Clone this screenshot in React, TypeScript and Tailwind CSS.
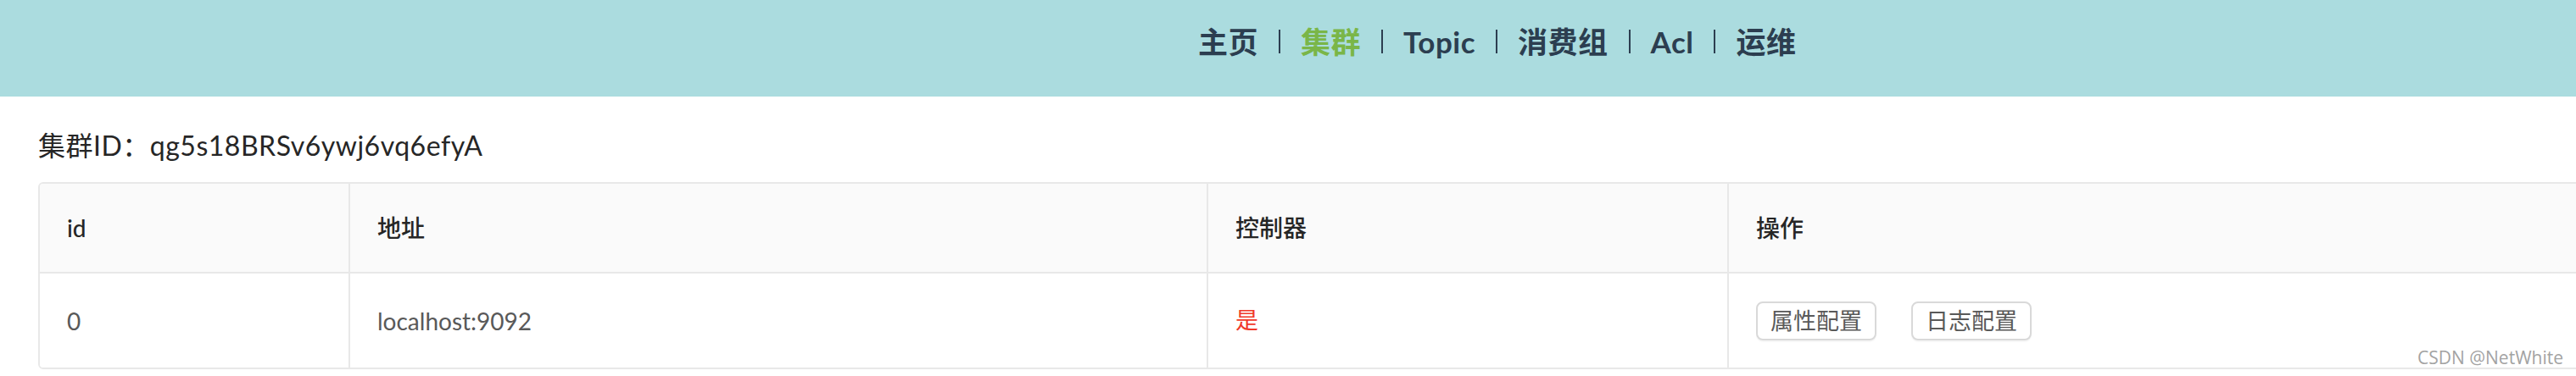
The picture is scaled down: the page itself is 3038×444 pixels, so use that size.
import React from 'react';

const navItems = [
  { label: '主页', active: false },
  { label: '集群', active: true },
  { label: 'Topic', active: false },
  { label: '消费组', active: false },
  { label: 'Acl', active: false },
  { label: '运维', active: false },
];

const columns = ['id', '地址', '控制器', '操作'];

const brokers = [{ id: 0, host: 'localhost:9092', controller: true }];

export default function App() {
  return (
    <div
      className="relative w-[3038px] h-[444px] overflow-hidden bg-white"
      style={{ fontFamily: 'Lato, "Noto Sans CJK SC", sans-serif' }}
    >
      {/* Top nav */}
      <div className="h-[114px] bg-[#abdcdf] flex items-center pl-[1413px] pb-4">
        {navItems.map((item, i) => (
          <div key={item.label} className="flex items-center">
            {i > 0 && <span className="mx-[24px] w-[2px] h-[28px] bg-[#2c3e50]" />}
            <span
              className={`text-[35px] font-bold leading-none tracking-[0.5px] ${item.active ? 'text-[#7ab648]' : 'text-[#2c3e50]'}`}
            >
              {item.label}
            </span>
          </div>
        ))}
      </div>

      {/* Cluster title */}
      <div className="px-[45px] pt-[34px] pb-[19px]">
        <h1 className="text-[32px] leading-[48px] font-normal tracking-[0.5px] text-[#262626]">
          集群ID：qg5s18BRSv6ywj6vq6efyA
        </h1>
      </div>

      {/* Broker table */}
      <div className="ml-[45px] w-[3100px] border-2 border-[#e8e8e8] rounded-[6px] overflow-hidden">
        <div className="grid grid-cols-[364px_1012px_614px_1fr] bg-[#fafafa] border-b-2 border-[#e8e8e8]">
          {columns.map((col, i) => (
            <div
              key={col}
              className={`h-[104px] flex items-center pl-8 text-[28px] font-medium text-[#262626] ${i > 0 ? 'border-l-2 border-[#e8e8e8]' : ''}`}
            >
              {col}
            </div>
          ))}
        </div>
        {brokers.map((b) => (
          <div key={b.id} className="grid grid-cols-[364px_1012px_614px_1fr] bg-white">
            <div className="h-[111px] flex items-center pl-8 text-[28px] text-[#595959]">{b.id}</div>
            <div className="h-[111px] flex items-center pl-8 text-[28px] text-[#595959] border-l-2 border-[#e8e8e8]">
              {b.host}
            </div>
            <div className="h-[111px] flex items-center pl-8 text-[27px] text-[#f0392b] border-l-2 border-[#e8e8e8]">
              {b.controller ? '是' : '否'}
            </div>
            <div className="h-[111px] flex items-center pl-8 gap-[41px] border-l-2 border-[#e8e8e8]">
              <button className="h-[46px] px-[15px] border-2 border-[#d9d9d9] rounded-[8px] bg-white text-[27px] leading-none text-[#595959] shadow-[0_2px_0_rgba(0,0,0,0.03)]">
                属性配置
              </button>
              <button className="h-[46px] px-[15px] border-2 border-[#d9d9d9] rounded-[8px] bg-white text-[27px] leading-none text-[#595959] shadow-[0_2px_0_rgba(0,0,0,0.03)]">
                日志配置
              </button>
            </div>
          </div>
        ))}
      </div>

      {/* Watermark */}
      <span
        className="absolute right-[15px] bottom-[6px] text-[21px] text-[#a3a3a3]"
        style={{ fontFamily: '"Open Sans", sans-serif' }}
      >
        CSDN @NetWhite
      </span>
    </div>
  );
}
